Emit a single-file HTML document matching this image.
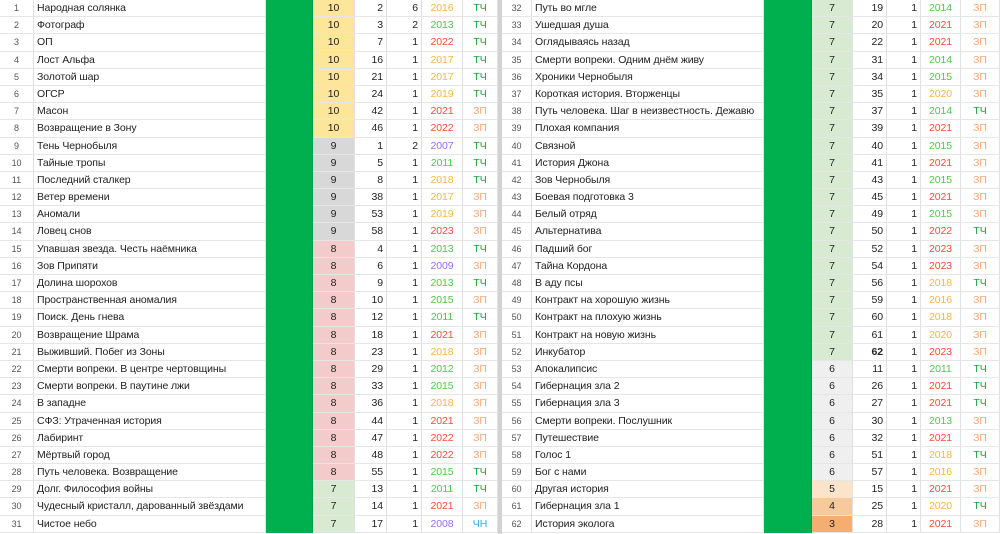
<!DOCTYPE html>
<html><head><meta charset="utf-8"><style>
*{margin:0;padding:0;box-sizing:border-box}
body{width:1000px;height:534px;overflow:hidden;background:#fff;font-family:"Liberation Sans",Arial,sans-serif;font-size:10.5px;letter-spacing:-0.1px;color:#222;position:relative}
.h{position:absolute;top:0;width:498px}
#L{left:0}#R{left:502px}
#sep{position:absolute;left:498px;top:0;width:4px;height:534px;background:#d2d2d2}
.r{display:flex;height:17.2px;line-height:16.6px}
.r>*{border-right:1px solid #e0e0e0;border-bottom:1px solid #e6e6e6;white-space:nowrap;overflow:hidden;font-style:normal;text-decoration:none;font-weight:normal;display:block}
.r i{font-size:9px;color:#555;text-align:center}
.r b{padding-left:3px}
.r s{background:#00b04f;border-bottom-color:#00b04f;border-right-color:#00a048}
.r u{text-align:center}
.r em{text-align:right;padding-right:3px}
.r q{text-align:center}
.r q:before,.r q:after{content:none}
.r var{text-align:center}
#L i{width:34px}#L b{width:232px}#L s{width:47px}#L u{width:42px}#L em:nth-of-type(1){width:32px}#L em:nth-of-type(2){width:35px}#L q{width:41px}#L var{width:35px}
#R i{width:30px}#R b{width:232px}#R s{width:48px}#R u{width:41px}#R em:nth-of-type(1){width:34px}#R em:nth-of-type(2){width:34px}#R q{width:40px}#R var{width:39px}
.a{background:#fde59a}.b{background:#d8d8d8}.c{background:#f3cbcb}.d{background:#d9ead3}.e{background:#efefef}.f{background:#fce4cb}.g4{background:#f8c99c}.h3{background:#f4ae72}
.o{color:#f5b73e}.g{color:#4cc94c}.x{color:#ff4a3a}.p{color:#9a6bff}
.t{color:#1aa33a}.z{color:#f7a470}.n{color:#2aaee8}
.bd{font-weight:bold!important}
</style></head><body>
<div id="sep"></div>
<div class="h" id="L">
<div class="r"><i>1</i><b>Народная солянка</b><s></s><u class="a">10</u><em>2</em><em>6</em><q class="o">2016</q><var class="t">ТЧ</var></div>
<div class="r"><i>2</i><b>Фотограф</b><s></s><u class="a">10</u><em>3</em><em>2</em><q class="g">2013</q><var class="t">ТЧ</var></div>
<div class="r"><i>3</i><b>ОП</b><s></s><u class="a">10</u><em>7</em><em>1</em><q class="x">2022</q><var class="t">ТЧ</var></div>
<div class="r"><i>4</i><b>Лост Альфа</b><s></s><u class="a">10</u><em>16</em><em>1</em><q class="o">2017</q><var class="t">ТЧ</var></div>
<div class="r"><i>5</i><b>Золотой шар</b><s></s><u class="a">10</u><em>21</em><em>1</em><q class="o">2017</q><var class="t">ТЧ</var></div>
<div class="r"><i>6</i><b>ОГСР</b><s></s><u class="a">10</u><em>24</em><em>1</em><q class="o">2019</q><var class="t">ТЧ</var></div>
<div class="r"><i>7</i><b>Масон</b><s></s><u class="a">10</u><em>42</em><em>1</em><q class="x">2021</q><var class="z">ЗП</var></div>
<div class="r"><i>8</i><b>Возвращение в Зону</b><s></s><u class="a">10</u><em>46</em><em>1</em><q class="x">2022</q><var class="z">ЗП</var></div>
<div class="r"><i>9</i><b>Тень Чернобыля</b><s></s><u class="b">9</u><em>1</em><em>2</em><q class="p">2007</q><var class="t">ТЧ</var></div>
<div class="r"><i>10</i><b>Тайные тропы</b><s></s><u class="b">9</u><em>5</em><em>1</em><q class="g">2011</q><var class="t">ТЧ</var></div>
<div class="r"><i>11</i><b>Последний сталкер</b><s></s><u class="b">9</u><em>8</em><em>1</em><q class="o">2018</q><var class="t">ТЧ</var></div>
<div class="r"><i>12</i><b>Ветер времени</b><s></s><u class="b">9</u><em>38</em><em>1</em><q class="o">2017</q><var class="z">ЗП</var></div>
<div class="r"><i>13</i><b>Аномали</b><s></s><u class="b">9</u><em>53</em><em>1</em><q class="o">2019</q><var class="z">ЗП</var></div>
<div class="r"><i>14</i><b>Ловец снов</b><s></s><u class="b">9</u><em>58</em><em>1</em><q class="x">2023</q><var class="z">ЗП</var></div>
<div class="r"><i>15</i><b>Упавшая звезда. Честь наёмника</b><s></s><u class="c">8</u><em>4</em><em>1</em><q class="g">2013</q><var class="t">ТЧ</var></div>
<div class="r"><i>16</i><b>Зов Припяти</b><s></s><u class="c">8</u><em>6</em><em>1</em><q class="p">2009</q><var class="z">ЗП</var></div>
<div class="r"><i>17</i><b>Долина шорохов</b><s></s><u class="c">8</u><em>9</em><em>1</em><q class="g">2013</q><var class="t">ТЧ</var></div>
<div class="r"><i>18</i><b>Пространственная аномалия</b><s></s><u class="c">8</u><em>10</em><em>1</em><q class="g">2015</q><var class="z">ЗП</var></div>
<div class="r"><i>19</i><b>Поиск. День гнева</b><s></s><u class="c">8</u><em>12</em><em>1</em><q class="g">2011</q><var class="t">ТЧ</var></div>
<div class="r"><i>20</i><b>Возвращение Шрама</b><s></s><u class="c">8</u><em>18</em><em>1</em><q class="x">2021</q><var class="z">ЗП</var></div>
<div class="r"><i>21</i><b>Выживший. Побег из Зоны</b><s></s><u class="c">8</u><em>23</em><em>1</em><q class="o">2018</q><var class="z">ЗП</var></div>
<div class="r"><i>22</i><b>Смерти вопреки. В центре чертовщины</b><s></s><u class="c">8</u><em>29</em><em>1</em><q class="g">2012</q><var class="z">ЗП</var></div>
<div class="r"><i>23</i><b>Смерти вопреки. В паутине лжи</b><s></s><u class="c">8</u><em>33</em><em>1</em><q class="g">2015</q><var class="z">ЗП</var></div>
<div class="r"><i>24</i><b>В западне</b><s></s><u class="c">8</u><em>36</em><em>1</em><q class="o">2018</q><var class="z">ЗП</var></div>
<div class="r"><i>25</i><b>СФЗ: Утраченная история</b><s></s><u class="c">8</u><em>44</em><em>1</em><q class="x">2021</q><var class="z">ЗП</var></div>
<div class="r"><i>26</i><b>Лабиринт</b><s></s><u class="c">8</u><em>47</em><em>1</em><q class="x">2022</q><var class="z">ЗП</var></div>
<div class="r"><i>27</i><b>Мёртвый город</b><s></s><u class="c">8</u><em>48</em><em>1</em><q class="x">2022</q><var class="z">ЗП</var></div>
<div class="r"><i>28</i><b>Путь человека. Возвращение</b><s></s><u class="c">8</u><em>55</em><em>1</em><q class="g">2015</q><var class="t">ТЧ</var></div>
<div class="r"><i>29</i><b>Долг. Философия войны</b><s></s><u class="d">7</u><em>13</em><em>1</em><q class="g">2011</q><var class="t">ТЧ</var></div>
<div class="r"><i>30</i><b>Чудесный кристалл, дарованный звёздами</b><s></s><u class="d">7</u><em>14</em><em>1</em><q class="x">2021</q><var class="z">ЗП</var></div>
<div class="r"><i>31</i><b>Чистое небо</b><s></s><u class="d">7</u><em>17</em><em>1</em><q class="p">2008</q><var class="n">ЧН</var></div>
</div>
<div class="h" id="R">
<div class="r"><i>32</i><b>Путь во мгле</b><s></s><u class="d">7</u><em>19</em><em>1</em><q class="g">2014</q><var class="z">ЗП</var></div>
<div class="r"><i>33</i><b>Ушедшая душа</b><s></s><u class="d">7</u><em>20</em><em>1</em><q class="x">2021</q><var class="z">ЗП</var></div>
<div class="r"><i>34</i><b>Оглядываясь назад</b><s></s><u class="d">7</u><em>22</em><em>1</em><q class="x">2021</q><var class="z">ЗП</var></div>
<div class="r"><i>35</i><b>Смерти вопреки. Одним днём живу</b><s></s><u class="d">7</u><em>31</em><em>1</em><q class="g">2014</q><var class="z">ЗП</var></div>
<div class="r"><i>36</i><b>Хроники Чернобыля</b><s></s><u class="d">7</u><em>34</em><em>1</em><q class="g">2015</q><var class="z">ЗП</var></div>
<div class="r"><i>37</i><b>Короткая история. Вторженцы</b><s></s><u class="d">7</u><em>35</em><em>1</em><q class="o">2020</q><var class="z">ЗП</var></div>
<div class="r"><i>38</i><b>Путь человека. Шаг в неизвестность. Дежавю</b><s></s><u class="d">7</u><em>37</em><em>1</em><q class="g">2014</q><var class="t">ТЧ</var></div>
<div class="r"><i>39</i><b>Плохая компания</b><s></s><u class="d">7</u><em>39</em><em>1</em><q class="x">2021</q><var class="z">ЗП</var></div>
<div class="r"><i>40</i><b>Связной</b><s></s><u class="d">7</u><em>40</em><em>1</em><q class="g">2015</q><var class="z">ЗП</var></div>
<div class="r"><i>41</i><b>История Джона</b><s></s><u class="d">7</u><em>41</em><em>1</em><q class="x">2021</q><var class="z">ЗП</var></div>
<div class="r"><i>42</i><b>Зов Чернобыля</b><s></s><u class="d">7</u><em>43</em><em>1</em><q class="g">2015</q><var class="z">ЗП</var></div>
<div class="r"><i>43</i><b>Боевая подготовка 3</b><s></s><u class="d">7</u><em>45</em><em>1</em><q class="x">2021</q><var class="z">ЗП</var></div>
<div class="r"><i>44</i><b>Белый отряд</b><s></s><u class="d">7</u><em>49</em><em>1</em><q class="g">2015</q><var class="z">ЗП</var></div>
<div class="r"><i>45</i><b>Альтернатива</b><s></s><u class="d">7</u><em>50</em><em>1</em><q class="x">2022</q><var class="t">ТЧ</var></div>
<div class="r"><i>46</i><b>Падший бог</b><s></s><u class="d">7</u><em>52</em><em>1</em><q class="x">2023</q><var class="z">ЗП</var></div>
<div class="r"><i>47</i><b>Тайна Кордона</b><s></s><u class="d">7</u><em>54</em><em>1</em><q class="x">2023</q><var class="z">ЗП</var></div>
<div class="r"><i>48</i><b>В аду псы</b><s></s><u class="d">7</u><em>56</em><em>1</em><q class="o">2018</q><var class="t">ТЧ</var></div>
<div class="r"><i>49</i><b>Контракт на хорошую жизнь</b><s></s><u class="d">7</u><em>59</em><em>1</em><q class="o">2016</q><var class="z">ЗП</var></div>
<div class="r"><i>50</i><b>Контракт на плохую жизнь</b><s></s><u class="d">7</u><em>60</em><em>1</em><q class="o">2018</q><var class="z">ЗП</var></div>
<div class="r"><i>51</i><b>Контракт на новую жизнь</b><s></s><u class="d">7</u><em>61</em><em>1</em><q class="o">2020</q><var class="z">ЗП</var></div>
<div class="r"><i>52</i><b>Инкубатор</b><s></s><u class="d">7</u><em class="bd">62</em><em>1</em><q class="x">2023</q><var class="z">ЗП</var></div>
<div class="r"><i>53</i><b>Апокалипсис</b><s></s><u class="e">6</u><em>11</em><em>1</em><q class="g">2011</q><var class="t">ТЧ</var></div>
<div class="r"><i>54</i><b>Гибернация зла 2</b><s></s><u class="e">6</u><em>26</em><em>1</em><q class="x">2021</q><var class="t">ТЧ</var></div>
<div class="r"><i>55</i><b>Гибернация зла 3</b><s></s><u class="e">6</u><em>27</em><em>1</em><q class="x">2021</q><var class="t">ТЧ</var></div>
<div class="r"><i>56</i><b>Смерти вопреки. Послушник</b><s></s><u class="e">6</u><em>30</em><em>1</em><q class="g">2013</q><var class="z">ЗП</var></div>
<div class="r"><i>57</i><b>Путешествие</b><s></s><u class="e">6</u><em>32</em><em>1</em><q class="x">2021</q><var class="z">ЗП</var></div>
<div class="r"><i>58</i><b>Голос 1</b><s></s><u class="e">6</u><em>51</em><em>1</em><q class="o">2018</q><var class="t">ТЧ</var></div>
<div class="r"><i>59</i><b>Бог с нами</b><s></s><u class="e">6</u><em>57</em><em>1</em><q class="o">2016</q><var class="z">ЗП</var></div>
<div class="r"><i>60</i><b>Другая история</b><s></s><u class="f">5</u><em>15</em><em>1</em><q class="x">2021</q><var class="z">ЗП</var></div>
<div class="r"><i>61</i><b>Гибернация зла 1</b><s></s><u class="g4">4</u><em>25</em><em>1</em><q class="o">2020</q><var class="t">ТЧ</var></div>
<div class="r"><i>62</i><b>История эколога</b><s></s><u class="h3">3</u><em>28</em><em>1</em><q class="x">2021</q><var class="z">ЗП</var></div>
</div>
</body></html>
